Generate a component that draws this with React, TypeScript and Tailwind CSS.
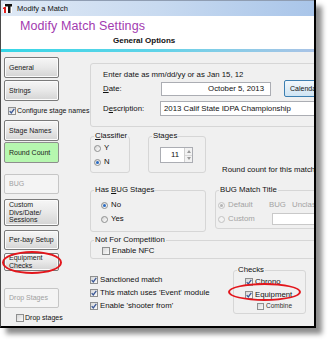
import React from "react";

function Box({ checked = false, small = false }: { checked?: boolean; small?: boolean }) {
  return (
    <span
      className={`${small ? "w-[7px] h-[7px]" : "w-[8px] h-[8px]"} shrink-0 border border-[#8e8f8f] bg-gradient-to-br from-[#d8d8d8] to-[#fbfbfb] flex items-center justify-center`}
    >
      {checked && (
        <svg width="6" height="6" viewBox="0 0 6 6">
          <path d="M0.7 3.1 L2.3 4.9 L5.3 0.8" stroke="#3b5896" strokeWidth="1.3" fill="none" />
        </svg>
      )}
    </span>
  );
}

function Radio({ on = false, disabled = false }: { on?: boolean; disabled?: boolean }) {
  return (
    <span
      className={`w-[7px] h-[7px] shrink-0 rounded-full border flex items-center justify-center ${
        disabled ? "border-[#c2c2c2] bg-[#f3f3f3]" : "border-[#8e8f8f] bg-gradient-to-br from-[#d4d4d4] to-white"
      }`}
    >
      {on && <span className={`w-[3px] h-[3px] rounded-full ${disabled ? "bg-[#b4b4b4]" : "bg-[#2a6bc2]"}`} />}
    </span>
  );
}

function Btn({
  children,
  h,
  mt,
  green = false,
  disabled = false,
}: {
  children: React.ReactNode;
  h: string;
  mt: string;
  green?: boolean;
  disabled?: boolean;
}) {
  const look = disabled
    ? "border-[#c6c6c6] bg-[#f4f4f4] text-[#a0a0a0]"
    : green
      ? "border-[#8e8e8e] bg-[#b6f7af] text-[#1a1a1a]"
      : "border-[#7a7a7a] bg-gradient-to-b from-[#f6f6f6] via-[#e8e8e8] to-[#d4d4d4] text-[#1a1a1a] shadow-[inset_0_0_0_1px_#fbfbfb]";
  return (
    <div className={`${h} ${mt} w-[55px] shrink-0 flex items-center px-[4px] border rounded-[2px] text-[7px] leading-[7.8px] ${look}`}>
      <div>{children}</div>
    </div>
  );
}

function Legend({ children }: { children: React.ReactNode }) {
  return <legend className="ml-[3px] px-[1px] text-[7.8px] leading-[10px] text-[#111]">{children}</legend>;
}

export default function App() {
  return (
    <div className="relative w-[331px] h-[344px] bg-white overflow-hidden font-['Liberation_Sans',Arial,sans-serif] text-[#111]">
      <div className="w-[316px] h-[328px] flex flex-col overflow-hidden border-l border-l-[#4a4a4a] border-r-2 border-r-black border-b-2 border-b-black shadow-[6px_6px_5px_rgba(0,0,0,0.45)]">
        {/* title bar */}
        <div className="h-[16px] shrink-0 flex items-center border-t border-t-[#8f9db2] bg-gradient-to-r from-[#dfe9f5] via-[#c8daf0] to-[#a9c5e9]">
          <svg className="ml-[2px]" width="9" height="9" viewBox="0 0 9 9">
            <rect x="0" y="0" width="9" height="9" fill="#fff" />
            <rect x="2" y="0" width="7" height="2.5" fill="#111" />
            <rect x="5" y="0" width="2.5" height="9" fill="#111" />
            <rect x="1" y="3" width="2" height="6" fill="#e21b1b" />
            <rect x="0" y="3.5" width="1.5" height="1.5" fill="#e21b1b" />
          </svg>
          <span className="ml-[5px] text-[7.5px] leading-[10px] text-[#111]">Modify a Match</span>
        </div>

        {/* header */}
        <div className="h-[33px] shrink-0 bg-white">
          <div className="pl-[19px] pt-[3px] text-[12.5px] leading-[15px] text-[#a23ab0] tracking-[0.1px]">
            Modify Match Settings
          </div>
          <div className="mt-[2px] pl-[112px] text-[8px] leading-[10px] font-bold text-[#111]">General Options</div>
        </div>
        <div className="h-[3px] shrink-0 bg-gradient-to-r from-[#34d6e6] via-[#5fd3e8] to-[#a9c3e6]" />

        {/* body */}
        <div className="flex-1 flex bg-[#f0f0f0]">
          {/* left column */}
          <div className="w-[58px] shrink-0 pl-[3px] pt-[5px] flex flex-col">
            <Btn h="h-[21px]" mt="mt-0">General</Btn>
            <Btn h="h-[21px]" mt="mt-[2px]">Strings</Btn>
            <div className="mt-[4px] h-[12px] flex items-center whitespace-nowrap">
              <span className="ml-[4px]">
                <Box checked />
              </span>
              <span className="ml-[1px] text-[7px] leading-[8px]">Configure stage names</span>
            </div>
            <Btn h="h-[21px]" mt="mt-[3px]">Stage Names</Btn>
            <Btn h="h-[21px]" mt="mt-[1px]" green>
              Round Count
            </Btn>
            <Btn h="h-[20px]" mt="mt-[11px]" disabled>
              BUG
            </Btn>
            <Btn h="h-[27px]" mt="mt-[5px]">
              Custom
              <br />
              Divs/Date/
              <br />
              Sessions
            </Btn>
            <Btn h="h-[20px]" mt="mt-[4px]">Per-bay Setup</Btn>
            <Btn h="h-[18px]" mt="mt-[3px]">
              Equipment
              <br />
              Checks
            </Btn>
            <Btn h="h-[20px]" mt="mt-[17px]" disabled>
              Drop Stages
            </Btn>
            <div className="mt-[5px] h-[10px] flex items-center whitespace-nowrap">
              <span className="ml-[12px]">
                <Box />
              </span>
              <span className="ml-[1px] text-[7px] leading-[8px]">Drop stages</span>
            </div>
          </div>

          {/* main column */}
          <div className="ml-[31px] w-[260px] shrink-0 pt-[11px] flex flex-col text-[7.8px] leading-[10px]">
            {/* date panel */}
            <div className="h-[64px] shrink-0 border border-[#d6d6d6] rounded-[3px] pl-[12px] pt-[6px] flex flex-col">
              <div className="h-[10px] whitespace-nowrap">Enter date as mm/dd/yy or as Jan 15, 12</div>
              <div className="h-[17px] flex items-center">
                <span className="w-[58px] shrink-0">
                  <u>D</u>ate:
                </span>
                <div className="w-[110px] h-[14px] shrink-0 bg-white border border-[#abadb3] flex items-center justify-end pr-[6px] whitespace-nowrap">
                  October 5, 2013
                </div>
                <div className="ml-[13px] w-[40px] h-[17px] shrink-0 border border-[#3c7fb1] rounded-[2px] bg-gradient-to-b from-[#f2f8fc] to-[#cfe4f3] flex items-center pl-[5px] text-[7px]">
                  Calendar
                </div>
              </div>
              <div className="mt-[4px] h-[15px] flex items-center">
                <span className="w-[57px] shrink-0">
                  D<u>e</u>scription:
                </span>
                <div className="w-[200px] h-[15px] shrink-0 bg-white border border-[#abadb3] flex items-center pl-[3px] whitespace-nowrap">
                  2013 Calif State IDPA Championship
                </div>
              </div>
            </div>

            {/* classifier / stages */}
            <div className="mt-[4px] flex">
              <fieldset className="w-[40px] h-[42px] shrink-0 border border-[#d6d6d6] rounded-[3px]">
                <Legend>
                  <u>C</u>lassifier
                </Legend>
                <div className="pl-[3px]">
                  <div className="h-[14px] flex items-center">
                    <Radio />
                    <span className="ml-[3px]">Y</span>
                  </div>
                  <div className="h-[14px] flex items-center">
                    <Radio on />
                    <span className="ml-[3px]">N</span>
                  </div>
                </div>
              </fieldset>
              <fieldset className="ml-[18px] w-[58px] h-[42px] shrink-0 border border-[#d6d6d6] rounded-[3px]">
                <Legend>Stages</Legend>
                <div className="mt-[6px] ml-[11px] w-[33px] h-[16px] bg-white border border-[#abadb3] flex">
                  <div className="flex-1 flex items-center justify-end pr-[5px]">11</div>
                  <div className="w-[8px] flex flex-col border-l border-[#d0d0d0]">
                    <div className="flex-1 flex items-center justify-center bg-[#f2f2f2] border-b border-[#d8d8d8]">
                      <svg width="4" height="3" viewBox="0 0 4 3">
                        <path d="M0 3 L2 0 L4 3 Z" fill="#9a9a9a" />
                      </svg>
                    </div>
                    <div className="flex-1 flex items-center justify-center bg-[#f2f2f2]">
                      <svg width="4" height="3" viewBox="0 0 4 3">
                        <path d="M0 0 L4 0 L2 3 Z" fill="#9a9a9a" />
                      </svg>
                    </div>
                  </div>
                </div>
              </fieldset>
              <div className="ml-[16px] mt-[34px] whitespace-nowrap">Round count for this match</div>
            </div>

            {/* BUG */}
            <div className="mt-[10px] flex">
              <fieldset className="w-[116px] h-[47px] shrink-0 border border-[#d6d6d6] rounded-[3px]">
                <Legend>
                  Has <u>B</u>UG Stages
                </Legend>
                <div className="pt-[3px] pl-[10px]">
                  <div className="h-[14px] flex items-center">
                    <Radio on />
                    <span className="ml-[3px]">No</span>
                  </div>
                  <div className="h-[14px] flex items-center">
                    <Radio />
                    <span className="ml-[3px]">Yes</span>
                  </div>
                </div>
              </fieldset>
              <fieldset className="ml-[9px] w-[150px] h-[44px] shrink-0 border border-[#d6d6d6] rounded-[3px]">
                <Legend>BUG Match Title</Legend>
                <div className="pt-[3px] pl-[2px] text-[#a3a3a3]">
                  <div className="h-[14px] flex items-center whitespace-nowrap">
                    <Radio on disabled />
                    <span className="ml-[3px] w-[41px]">Default</span>
                    <span className="w-[23px]">BUG</span>
                    <span>Unclassified</span>
                  </div>
                  <div className="h-[14px] flex items-center">
                    <Radio disabled />
                    <span className="ml-[3px] w-[44px]">Custom</span>
                    <div className="w-[80px] h-[12px] bg-white border border-[#c9c9c9]" />
                  </div>
                </div>
              </fieldset>
            </div>

            {/* NFC */}
            <fieldset className="mt-[3px] w-[240px] h-[24px] shrink-0 border border-[#d6d6d6] rounded-[3px]">
              <Legend>Not For Competition</Legend>
              <div className="pt-[1px] pl-[11px] h-[11px] flex items-center">
                <Box />
                <span className="ml-[2px]">Enable NFC</span>
              </div>
            </fieldset>

            {/* bottom */}
            <div className="mt-[6px] flex">
              <div className="w-[143px] shrink-0 pt-[8px] whitespace-nowrap">
                <div className="h-[13px] flex items-center">
                  <Box checked />
                  <span className="ml-[2px]">Sanctioned match</span>
                </div>
                <div className="h-[13px] flex items-center">
                  <Box checked />
                  <span className="ml-[2px]">This match uses 'Event' module</span>
                </div>
                <div className="h-[13px] flex items-center">
                  <Box checked />
                  <span className="ml-[2px]">Enable 'shooter from'</span>
                </div>
              </div>
              <fieldset className="w-[73px] h-[49px] shrink-0 border border-[#d6d6d6] rounded-[3px]">
                <Legend>Checks</Legend>
                <div className="pl-[11px] whitespace-nowrap">
                  <div className="h-[13px] flex items-center">
                    <Box checked />
                    <span className="ml-[2px]">Chrono</span>
                  </div>
                  <div className="h-[13px] flex items-center">
                    <Box checked />
                    <span className="ml-[2px]">Equipment</span>
                  </div>
                  <div className="h-[10px] ml-[12px] flex items-center text-[6.5px] text-[#333]">
                    <Box small />
                    <span className="ml-[2px]">Combine</span>
                  </div>
                </div>
              </fieldset>
            </div>
          </div>
        </div>
      </div>

      {/* red annotations */}
      <div className="absolute left-[2px] top-[251px] w-[60px] h-[23px] rounded-[50%] border-2 border-[#e3161c]" />
      <div className="absolute left-[228px] top-[283px] w-[73px] h-[18px] rounded-[50%] border-2 border-[#e3161c]" />
    </div>
  );
}
